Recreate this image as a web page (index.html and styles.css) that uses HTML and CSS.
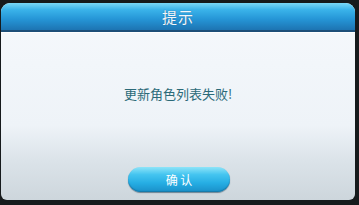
FILE: index.html
```html
<!DOCTYPE html>
<html>
<head>
<meta charset="utf-8">
<link rel="stylesheet" href="styles.css">
</head>
<body>
<div class="dialog">
  <div class="header">提示</div>
  <div class="content">
    <div class="message">更新角色列表失败!</div>
    <div class="footer">
      <button class="btn">确 认</button>
    </div>
  </div>
</div>
</body>
</html>
```

FILE: styles.css
```css
html, body {
  margin: 0;
  padding: 0;
  width: 359px;
  height: 205px;
  overflow: hidden;
  background: #161a1c;
}
body {
  padding: 3px 4px 5px 1px;
  box-sizing: border-box;
  font-family: "Noto Sans CJK SC", "Noto Sans", sans-serif;
}
.dialog {
  width: 354px;
  height: 197px;
  border-radius: 9px 9px 6px 6px;
  overflow: hidden;
  display: flex;
  flex-direction: column;
  background: linear-gradient(#f6f9fc 0%, #eef3f8 62%, #dbe3e9 80%, #cdd6dc 100%);
}
.header {
  height: 27px;
  flex: none;
  display: flex;
  align-items: center;
  justify-content: center;
  color: #f2f8fc;
  font-size: 15px;
  letter-spacing: 1px;
  background: linear-gradient(#7ad8f7 0%, #3ab3ea 25%, #2595d6 60%, #1d74b2 100%);
  border-bottom: 2px solid #1d4f78;
  box-shadow: 0 1px 0 #ffffff;
  text-shadow: 0 0 1px #1b5d8f;
}
.content {
  flex: 1;
  display: flex;
  flex-direction: column;
}
.message {
  flex: 1;
  display: flex;
  align-items: center;
  justify-content: center;
  padding-bottom: 12px;
  color: #2b6a78;
  font-size: 13px;
}
.footer {
  height: 34px;
  flex: none;
  display: flex;
  justify-content: center;
  align-items: flex-start;
  padding-top: 1px;
  box-sizing: border-box;
}
.btn {
  width: 102px;
  height: 25px;
  margin-left: 2px;
  border: none;
  border-radius: 13px;
  color: #ffffff;
  font-family: "Noto Sans CJK SC", "Noto Sans", sans-serif;
  font-size: 12px;
  padding: 0;
  background: linear-gradient(#8ee4f8 0%, #45c5f0 30%, #25ade3 65%, #1a8fc8 100%);
  box-shadow: 0 1px 1px #6c8494, inset 0 -1px 1px #1679a9;
}
```
